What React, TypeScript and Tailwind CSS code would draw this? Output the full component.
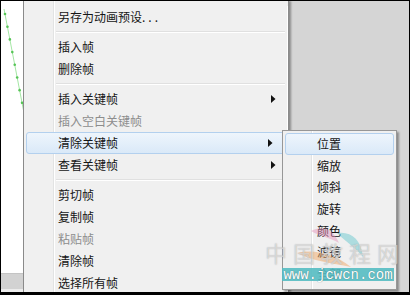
import type { ReactNode } from 'react';

const font = { fontFamily: '"Noto Sans CJK SC", "Noto Sans", sans-serif' };

type Entry =
  | { kind: 'item'; label: ReactNode; disabled?: boolean; arrow?: boolean; active?: boolean }
  | { kind: 'sep' };

const mainItems: Entry[] = [
  { kind: 'item', label: (
    <>
      另存为动画预设<span className="tracking-[3px]">...</span>
    </>
  ) },
  { kind: 'sep' },
  { kind: 'item', label: '插入帧' },
  { kind: 'item', label: '删除帧' },
  { kind: 'sep' },
  { kind: 'item', label: '插入关键帧', arrow: true },
  { kind: 'item', label: '插入空白关键帧', disabled: true },
  { kind: 'item', label: '清除关键帧', arrow: true, active: true },
  { kind: 'item', label: '查看关键帧', arrow: true },
  { kind: 'sep' },
  { kind: 'item', label: '剪切帧' },
  { kind: 'item', label: '复制帧' },
  { kind: 'item', label: '粘贴帧', disabled: true },
  { kind: 'item', label: '清除帧' },
  { kind: 'item', label: '选择所有帧' },
];

const subItems = ['位置', '缩放', '倾斜', '旋转', '颜色', '滤镜', '全部'];

function Arrow() {
  return (
    <svg width="5" height="8" viewBox="0 0 5 8" className="ml-auto mr-[11px]">
      <path d="M0 0 L4.5 4 L0 8 Z" fill="#111" />
    </svg>
  );
}

function MenuRow({ entry }: { entry: Entry }) {
  if (entry.kind === 'sep') {
    return (
      <div className="flex h-[8px] items-center pl-[32px] pr-[2px]">
        <div className="h-[2px] w-full border-t border-b border-t-[#e0e0e0] border-b-white" />
      </div>
    );
  }
  const color = entry.disabled ? 'text-[#8d8d8d]' : 'text-[#151515]';
  if (entry.active) {
    return (
      <div className={`mx-[2px] flex h-[22px] items-center rounded-[3px] border border-[#b3d0ee] bg-[linear-gradient(to_bottom,#eef5fc,#dae9f8)] pl-[31px] text-[12px] ${color}`}>
        <span>{entry.label}</span>
        {entry.arrow ? <Arrow /> : null}
      </div>
    );
  }
  return (
    <div className={`flex h-[22px] items-center pl-[34px] text-[12px] ${color}`}>
      <span>{entry.label}</span>
      {entry.arrow ? <Arrow /> : null}
    </div>
  );
}

function TimelineStrip() {
  const dots = Array.from({ length: 8 }, (_, i) => i);
  return (
    <svg width="22" height="272" viewBox="0 0 22 272">
      <line x1="3" y1="8" x2="23" y2="112" stroke="#a4e6a4" strokeWidth="1" />
      {dots.map((i) => {
        const t = i / 7.8;
        return <circle key={i} cx={4 + t * 19} cy={13 + t * 99} r="1.3" fill="#56c456" />;
      })}
    </svg>
  );
}

export default function App() {
  return (
    <div
      className="relative flex h-[295px] w-[410px] overflow-hidden border-x border-t border-b-[3px] border-black bg-[#d5d5d5]"
      style={font}
    >
      {/* left timeline strip */}
      <div className="flex w-[22px] shrink-0 flex-col bg-white">
        <div className="h-[272px]">
          <TimelineStrip />
        </div>
        <div className="h-[16px] border-t border-[#c4c4c4] bg-[#d2d2d2]" />
        <div className="flex-1 bg-[#ececec]" />
      </div>

      {/* main context menu */}
      <div className="w-[266px] shrink-0 border-x border-[#8a8a8a] bg-[#f0f0f0] bg-[linear-gradient(to_right,#f0f0f0_29px,#e2e3e3_29px,#e2e3e3_30px,#ffffff_30px,#ffffff_31px,#f0f0f0_31px)] pt-[5px] shadow-[2px_0_2px_rgba(0,0,0,0.35)]">
        <div className="border-r border-white">
          {mainItems.map((entry, i) => (
            <MenuRow key={i} entry={entry} />
          ))}
        </div>
      </div>

      <div className="flex-1" />

      {/* submenu */}
      <div className="absolute left-[281px] top-[129px] h-[160px] w-[115px] border border-[#979797] bg-[#f0f0f0] bg-[linear-gradient(to_right,#f0f0f0_28px,#e2e3e3_28px,#e2e3e3_29px,#ffffff_29px,#ffffff_30px,#f0f0f0_30px)] pt-[2px] shadow-[2px_2px_2px_rgba(0,0,0,0.35)]">
        {subItems.map((label, i) =>
          i === 0 ? (
            <div
              key={label}
              className="mx-[2px] flex h-[22px] items-center rounded-[3px] border border-[#b3d0ee] bg-[linear-gradient(to_bottom,#eef5fc,#dae9f8)] pl-[31px] text-[12px] text-[#151515]"
            >
              {label}
            </div>
          ) : (
            <div key={label} className="flex h-[21.6px] items-center pl-[34px] text-[12px] text-[#151515]">
              {label}
            </div>
          ),
        )}
      </div>

      {/* watermark logo */}
      <svg className="pointer-events-none absolute left-[292px] top-[222px]" width="80" height="48" viewBox="0 0 80 48">
        <path d="M18 8 C30 2 40 6 46 20 C36 14 28 14 18 8 Z" fill="#e58fb7" opacity="0.45" />
        <path d="M44 10 C58 8 68 16 70 34 C62 24 54 20 44 10 Z" fill="#5cc3c9" opacity="0.45" />
        <path d="M4 30 C20 26 40 30 58 44 C38 40 20 38 4 30 Z" fill="#f0a868" opacity="0.5" />
      </svg>
      <div className="pointer-events-none absolute left-[264px] top-[240px] whitespace-nowrap text-[22px] leading-none tracking-[6px] text-white/50 [text-shadow:0_0_1px_rgba(120,120,120,0.6)]">
        中国教程网
      </div>
      <div
        className="pointer-events-none absolute left-[281px] top-[267px] flex h-[13px] w-[112px] items-center justify-center whitespace-nowrap bg-[#55bcc2]/90 text-[14px] leading-none text-white [text-shadow:0_0_1px_#3a6a70]"
        style={{ fontFamily: '"Liberation Mono", monospace' }}
      >
        www.jcwcn.com
      </div>
    </div>
  );
}
